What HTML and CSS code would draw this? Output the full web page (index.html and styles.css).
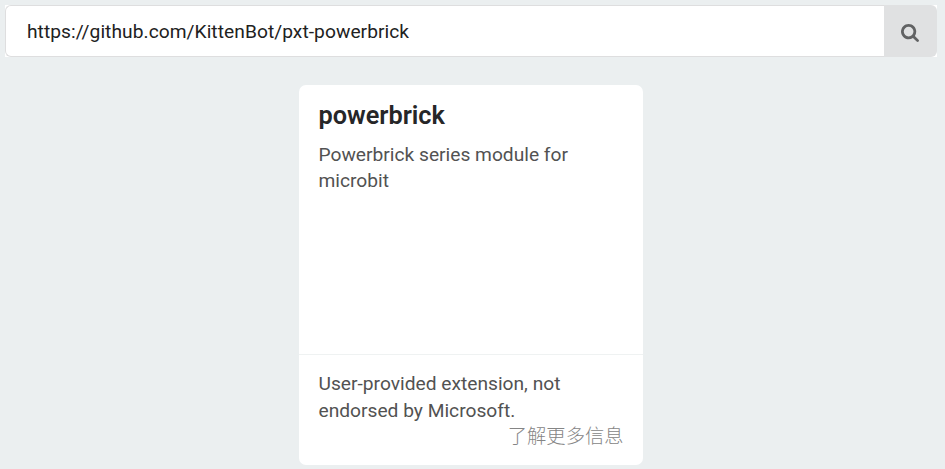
FILE: index.html
```html
<!DOCTYPE html>
<html lang="zh-CN">
<head>
<meta charset="utf-8">
<title>Extensions</title>
<link rel="stylesheet" href="styles.css">
</head>
<body>
<form class="search">
<input class="search-input" type="text" value="https://github.com/KittenBot/pxt-powerbrick" aria-label="Search">
<button class="search-button" type="button" aria-label="Search">
<svg class="search-icon" viewBox="0 0 1664 1664"><path d="M1152 704q0-185-131.500-316.500T704 256 387.500 387.500 256 704t131.500 316.500T704 1152t316.500-131.500T1152 704zm512 832q0 52-38 90t-90 38q-54 0-90-38l-343-342q-179 124-399 124-143 0-273.500-55.500t-225-150-150-225T0 704t55.500-273.500 150-225 225-150T704 0t273.500 55.500 225 150 150 225T1408 704q0 220-124 399l343 343q37 37 37 90z"/></svg>
</button>
</form>
<main class="cards">
<article class="card">
<div class="content">
<h1 class="title">powerbrick</h1>
<p class="description">Powerbrick series module for microbit</p>
</div>
<footer class="extra">
<p class="notice">User-provided extension, not endorsed by Microsoft.</p>
<a class="more">了解更多信息</a>
</footer>
</article>
</main>
</body>
</html>
```

FILE: styles.css
```css
* { box-sizing: border-box; }
body {
  margin: 0;
  height: 469px;
  overflow: hidden;
  background: #ebeff0;
  font-family: Roboto, "Noto Sans CJK SC", sans-serif;
}
.search {
  display: flex;
  height: 52px;
  margin: 5px 8px 28px 5px;
  background: #fff;
}
.search-input {
  flex: 1;
  min-width: 0;
  padding: 0 21px;
  border: 1px solid #dededf;
  border-right: 0;
  border-radius: 6px 0 0 6px;
  background: #fff;
  color: #212121;
  font: 19.2px Roboto, sans-serif;
  letter-spacing: 0.05px;
  outline: 0;
}
.search-button {
  display: flex;
  align-items: center;
  justify-content: center;
  width: 53px;
  padding: 3px 1px 0 0;
  border: 0;
  border-radius: 0 6px 6px 0;
  background: #e0e1e2;
}
.search-icon { width: 18px; height: 18px; fill: #616263; }
.cards { padding-left: 299px; }
.card {
  display: flex;
  flex-direction: column;
  width: 344px;
  height: 380px;
  border-radius: 7px;
  background: #fff;
}
.content { flex: 1; padding: 14px 19.5px; }
.title {
  margin: 0;
  color: #262628;
  font-size: 25.3px;
  line-height: 33px;
  font-weight: 600;
}
.description {
  margin: 10px 0 0;
  color: #525252;
  font-size: 19.2px;
  line-height: 26.4px;
}
.extra {
  height: 111px;
  padding: 16px 19.5px 0;
  border-top: 1px solid #eff2f2;
  color: #525252;
  font-size: 19.2px;
  line-height: 26.6px;
}
.notice { margin: 0; }
.more {
  display: block;
  text-align: right;
  color: #858585;
  font-size: 19.3px;
  font-weight: 300;
  line-height: 26px;
}
```
